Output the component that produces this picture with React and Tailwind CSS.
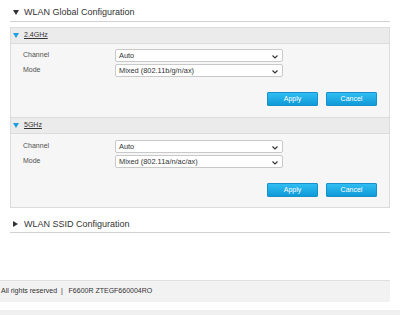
import React from 'react';

const font = { fontFamily: '"Liberation Sans", Arial, sans-serif' };

const Chevron = () => (
  <svg width="6" height="4" viewBox="0 0 6 4" className="absolute right-[4px] top-[5px]">
    <path d="M0.5 0.5 L3 3 L5.5 0.5" fill="none" stroke="#333" strokeWidth="1.1" />
  </svg>
);

const Select = ({ value }) => (
  <div className="relative w-[168px] h-[13px] bg-white border border-[#c9c9c9] rounded-[2px] text-[7.4px] leading-[11px] pl-[3px] text-[#333]">
    {value}
    <Chevron />
  </div>
);

const Button = ({ children }) => (
  <button className="w-[51px] h-[14px] border border-[#1a90c9] rounded-[1px] bg-gradient-to-b from-[#2fbdf3] to-[#0d9ad7] text-white text-[7px] leading-[12px]">
    {children}
  </button>
);

const Row = ({ label, value }) => (
  <div className="flex items-center h-[13px]">
    <span className="w-[104px] pl-[12px] text-[7px] text-[#505050]">{label}</span>
    <Select value={value} />
  </div>
);

const Band = ({ name, mode, first, pt }) => (
  <>
    <div
      className={`flex items-center bg-[#ebebeb] border-b border-[#dcdcdc] ${first ? 'h-[16px]' : 'h-[17px] border-t'}`}
    >
      <svg width="6" height="5" viewBox="0 0 6 5" className="ml-[2px]">
        <path d="M0 0 H6 L3 5 Z" fill="#1e9ee0" />
      </svg>
      <span className="ml-[5px] text-[7px] text-[#333] underline">{name}</span>
    </div>
    <div className={`flex flex-col ${pt}`}>
      <div className="flex flex-col gap-[2px]">
        <Row label="Channel" value="Auto" />
        <Row label="Mode" value={mode} />
      </div>
      <div className="flex justify-end gap-[8px] pr-[12px] mt-[15px]">
        <Button>Apply</Button>
        <Button>Cancel</Button>
      </div>
    </div>
  </>
);

export default function App() {
  return (
    <div className="w-[400px] h-[315px] bg-white overflow-hidden" style={font}>
      <div className="ml-[10px] w-[380px]">
        <div className="flex items-center pt-[7px] pb-[4px] border-b border-[#d2d2d2]">
          <svg width="6" height="5" viewBox="0 0 6 5" className="ml-[3px]">
            <path d="M0 0 H6 L3 5 Z" fill="#333" />
          </svg>
          <span className="ml-[5px] text-[9px] leading-[10px] text-[#333]">WLAN Global Configuration</span>
        </div>
        <div className="mt-[5px] border border-[#dcdcdc] bg-[#f6f6f6]">
          <Band first name="2.4GHz" mode="Mixed (802.11b/g/n/ax)" pt="pt-[5px] pb-[11px]" />
          <Band name="5GHz" mode="Mixed (802.11a/n/ac/ax)" pt="pt-[6px] pb-[10px]" />
        </div>
        <div className="flex items-center pt-[11px] pb-[3px] border-b border-[#d2d2d2]">
          <svg width="5" height="6" viewBox="0 0 5 6" className="ml-[3px]">
            <path d="M0 0 V6 L5 3 Z" fill="#333" />
          </svg>
          <span className="ml-[6px] text-[9px] leading-[10px] text-[#333]">WLAN SSID Configuration</span>
        </div>
      </div>
      <div className="mt-[47px] w-[390px] h-[22px] border-t border-[#e0e0e0] bg-[#f2f2f2] flex items-center overflow-hidden">
        <span className="ml-[1px] text-[7px] text-[#333] whitespace-nowrap">
          All rights reserved&nbsp;&nbsp;|&nbsp;&nbsp;&nbsp;F6600R ZTEGF660004RO
        </span>
      </div>
      <div className="h-[8px]" />
      <div className="h-[10px] bg-[#f0f0f0]" />
    </div>
  );
}
